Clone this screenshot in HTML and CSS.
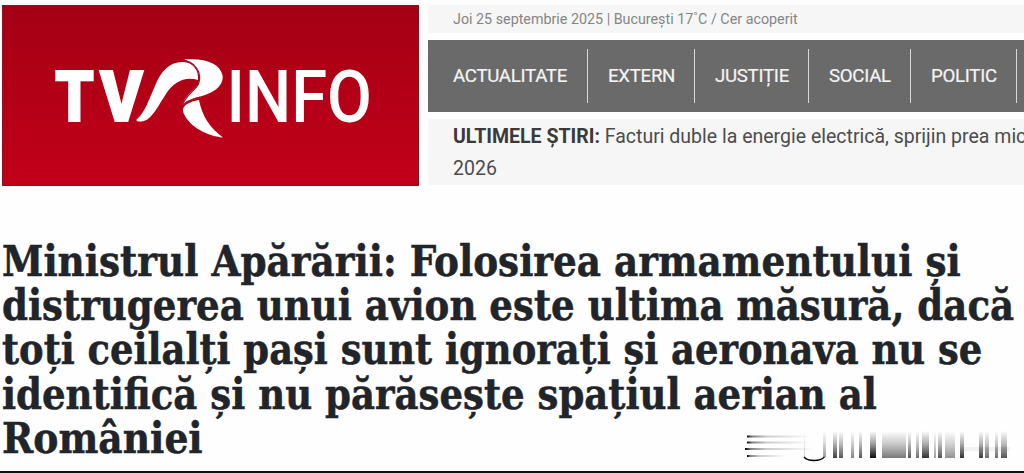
FILE: index.html
```html
<!DOCTYPE html>
<html lang="ro">
<head>
    <meta charset="UTF-8">
    <meta name="viewport" content="width=device-width, initial-scale=1.0">
    <title>TVR Info</title>
    <link rel="stylesheet" href="styles.css">
</head>
<body>
    <header>
        <a class="logo">
            <svg width="417" height="181" viewBox="2 5 417 181">
                <g fill="#fff">
                    <text class="logo-bold" x="55" y="120.500" textLength="39" lengthAdjust="spacingAndGlyphs">T</text>
                    <text class="logo-bold" x="100" y="120.500" textLength="43" lengthAdjust="spacingAndGlyphs">V</text>
                    <text class="logo-light" x="226.500" y="121.500" textLength="145.500" lengthAdjust="spacingAndGlyphs">INFO</text>
                    <path d="M136.500 119.500C145 113 149 99 155 86C161 70 171 61.500 183 62C193 62.500 199 70 198 80C184 76 173 83 166 94C159 104 153 118 144 121C140 122 136 122 136.500 119.500Z"/>
                    <path d="M184 59.500C206 57.500 220 64 222.500 75C224.500 87 211 94 198 97C191 99 186 102 182 107C183 97 193 91 198 85C202 75 197 63 184 59.500Z"/>
                    <path d="M184 107C187 103 193 101 199 100C202 116 210 128 223 137.500C207 136 190 127 184 114C182.500 111 182.500 109 184 107Z"/>
                </g>
                <path class="logo-fold" d="M182 60.500C195 61 202.500 73 198.500 84C194 92 184 96 182 107C185 101 192 99 200 97.500"/>
            </svg>
        </a>
        <div class="header-right">
            <div class="top-bar">Joi 25 septembrie 2025 | București 17˚C / Cer acoperit</div>
            <nav>
                <a class="actualitate">ACTUALITATE</a>
                <a class="extern">EXTERN</a>
                <a class="justitie">JUSTIȚIE</a>
                <a class="social">SOCIAL</a>
                <a class="politic">POLITIC</a>
            </nav>
            <div class="ticker"><b>ULTIMELE ȘTIRI:</b> <span>Facturi duble la energie electrică, sprijin prea mic</span><br>2026</div>
        </div>
    </header>

    <main>
        <h1>
            <span class="line line-1">Ministrul Apărării: Folosirea armamentului și</span>
            <span class="line line-2">distrugerea unui avion este ultima măsură, dacă</span>
            <span class="line line-3">toți ceilalți pași sunt ignorați și aeronava nu se</span>
            <span class="line line-4">identifică și nu părăsește spațiul aerian al</span>
            <span class="line line-5">României</span>
        </h1>
        <svg class="streaks" width="280" height="36" viewBox="744 428 280 36">
            <defs>
                <linearGradient id="across">
                    <stop offset="0" stop-color="#000"/>
                    <stop offset=".08" stop-color="#000" stop-opacity=".5"/>
                    <stop offset=".3" stop-color="#000" stop-opacity=".2"/>
                    <stop offset="1" stop-color="#000" stop-opacity="0"/>
                </linearGradient>
                <linearGradient id="down" x2="0" y2="1">
                    <stop offset="0" stop-color="#000" stop-opacity="0"/>
                    <stop offset=".5" stop-color="#000" stop-opacity=".4"/>
                    <stop offset="1" stop-color="#000" stop-opacity=".95"/>
                </linearGradient>
            </defs>
            <g fill="url(#across)">
                <rect x="747" y="435.500" width="65" height="2"/>
                <rect x="747" y="441.500" width="65" height="2"/>
                <rect x="745" y="448" width="70" height="2"/>
                <rect x="747" y="455" width="40" height="2"/>
            </g>
            <path d="M804 457Q807 460.500 814 460.500T824.500 457" fill="none" stroke="#000" stroke-width="1.300"/>
            <g fill="url(#down)">
                <rect x="804" y="431" width="1" height="26" opacity=".2"/>
                <rect x="823" y="431" width="3" height="26" opacity=".4"/>
                <rect x="833" y="431" width="4" height="27" opacity=".8"/>
                <rect x="839" y="431" width="4" height="27" opacity=".7"/>
                <rect x="851" y="431" width="3" height="27" opacity=".5"/>
                <rect x="859" y="431" width="3" height="27" opacity=".7"/>
                <rect x="870" y="431" width="6" height="27"/>
                <rect x="882" y="431" width="24" height="27" opacity=".55"/>
                <rect x="908" y="431" width="3" height="27" opacity=".7"/>
                <rect x="916" y="431" width="3" height="27" opacity=".6"/>
                <rect x="922" y="431" width="7" height="27" opacity=".85"/>
                <rect x="934" y="431" width="2" height="27" opacity=".4"/>
                <rect x="938" y="431" width="4" height="27" opacity=".7"/>
                <rect x="945" y="431" width="10" height="27" opacity=".45"/>
                <rect x="960" y="431" width="4" height="27" opacity=".85"/>
                <rect x="979" y="431" width="4" height="27" opacity=".8"/>
                <rect x="985" y="431" width="4" height="27" opacity=".6"/>
                <rect x="995" y="431" width="3" height="27" opacity=".6"/>
                <rect x="1001" y="431" width="6" height="27" opacity=".7"/>
            </g>
            <rect x="964" y="447" width="46" height="4" opacity=".05"/>
        </svg>
    </main>
</body>
</html>
```
FILE: styles.css
```css
* {
    box-sizing: border-box;
}

body {
    font-family: Roboto, Arial, sans-serif;
    margin: 0;
    height: 473px;
    background-color: #fefefe;
    overflow: hidden;
}

header {
    display: flex;
    gap: 9px;
    padding: 5px 0 0 2px;
}

.logo {
    flex: none;
    width: 417px;
    height: 181px;
    background: linear-gradient(#a40014, #c20019);
    border: 1px solid #8b1020;
}

.logo svg {
    display: block;
    margin: -1px;
}

.logo-bold {
    font: 900 70px Roboto, sans-serif;
    stroke: #fff;
    stroke-width: 1.8px;
}

.logo-light {
    font: 500 73px Roboto, sans-serif;
}

.logo-fold {
    fill: none;
    stroke: #a01428;
    stroke-width: 1.3px;
}

.header-right {
    flex: 1;
    min-width: 0;
    white-space: nowrap;
}

.top-bar {
    height: 28px;
    padding-left: 25px;
    background-color: #f6f6f6;
    color: #858585;
    font-size: 14.3px;
    line-height: 29px;
}

nav {
    display: flex;
    align-items: center;
    height: 72px;
    margin-top: 7px;
    padding-left: 5px;
    background-color: #6a6a6a;
}

nav a {
    flex: none;
    height: 54px;
    padding-left: 20px;
    border-right: 1px solid #d8d8d8;
    color: #f4f4f4;
    font-size: 18.7px;
    line-height: 54px;
    letter-spacing: -0.3px;
    -webkit-text-stroke: 0.2px #f4f4f4;
}

.actualitate {
    width: 155px;
}

.extern {
    width: 107px;
}

.justitie {
    width: 114px;
}

.social {
    width: 102px;
}

.politic {
    width: 106px;
}

.ticker {
    height: 66px;
    margin-top: 7px;
    padding: 2px 0 0 25px;
    background-color: #f6f6f6;
    color: #4c4c4c;
    font-size: 19.5px;
    line-height: 32px;
}

.ticker b {
    color: #3a3a3a;
}

main {
    position: relative;
    height: 287px;
    padding-top: 53px;
    border-bottom: 2px solid #111;
}

h1 {
    margin: 0 0 0 2px;
    color: #212429;
    font-family: "Roboto Slab", "DejaVu Serif Condensed", "DejaVu Serif", serif;
    font-size: 42.5px;
    font-stretch: condensed;
    font-weight: bold;
    line-height: 44.2px;
    white-space: nowrap;
    -webkit-text-stroke: 0.5px #212429;
}

.line {
    display: block;
    width: max-content;
    transform-origin: left;
}

.line-1 {
    transform: scaleX(0.978);
}

.line-2 {
    transform: scaleX(0.972);
}

.line-3 {
    transform: scaleX(0.965);
}

.line-4 {
    transform: scaleX(0.97);
}

.line-5 {
    transform: scaleX(0.985);
}

.streaks {
    position: absolute;
    left: 744px;
    top: 242px;
}
```
